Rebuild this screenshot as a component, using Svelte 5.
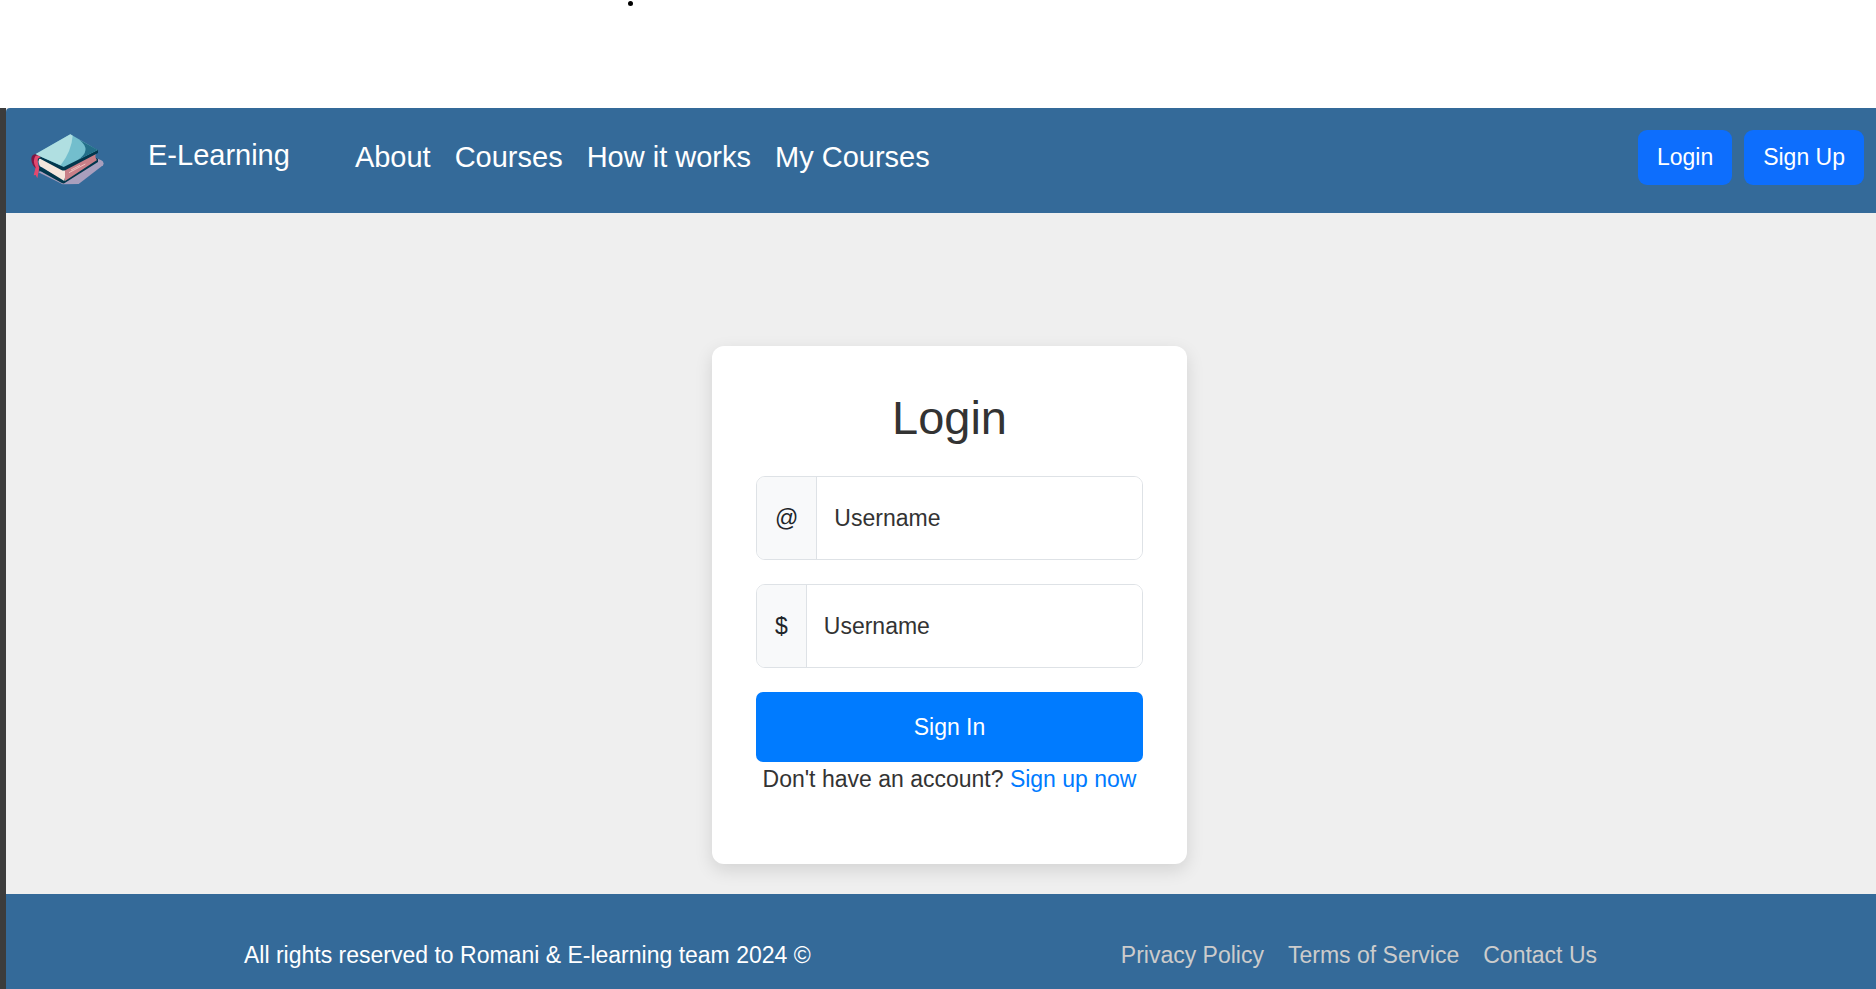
<script>
  const navLinks = ['About', 'Courses', 'How it works', 'My Courses'];
  const footerLinks = ['Privacy Policy', 'Terms of Service', 'Contact Us'];
  const fields = [
    { id: 'username', sign: '@', type: 'text' },
    { id: 'password', sign: '$', type: 'password' }
  ];
</script>

<div class="top"><span class="dot"></span></div>

<div class="page">
  <header>
    <a class="logo" href="#home" aria-label="Home">
      <svg viewBox="33 26 219 153" width="73" height="51" aria-hidden="true">
        <path fill="#a99fbd" d="M54 140 L128 177 L176 176 L249 120 Q254 110 244 105 L228 98 Z" />
        <path fill="#02374d" d="M50 118 L130 161 L230 98 L234 101 L234 110 L133 174 Q129 175 124 172 L50 131 Z" />
        <path fill="#f5e6dd" d="M56 94 Q54 114 61 123 L133 167 L138 134 L66 97 Z" />
        <path fill="#c87f88" d="M135 132 L228 84 Q223 97 231 104 L135 167 Z" />
        <path fill="none" stroke="#f0cfca" stroke-width="2.5" d="M147 142 L196 116 M153 134 L180 120" />
        <path fill="#02374d" d="M44 88 L151 30 L234 74 L234 83 L137 134 Q131 137 124 134 L62 101 Q56 99 56 106 L44 104 Z" />
        <path fill="#73becd" d="M46 87 L151 27 L233 74 L131 125 Z" />
        <path fill="#246f89" d="M178 43 L233 74 L172 105 Q218 74 178 43 Z" />
        <path fill="#b0dfe1" d="M46 87 L151 27 L158 31 Q155 76 122 120 Z" />
        <path fill="#7b1743" d="M48 87 Q34 87 34 101 Q35 121 50 131 L53 124 Q45 113 49 99 L58 97 Z" />
        <path fill="#e4486e" d="M47 91 Q58 88 62 96 Q52 97 53 109 Q54 120 58 127 L52 159 L47 149 L41 150 L47 126 Q36 105 47 91 Z" />
      </svg>
    </a>
    <a class="brand" href="#home">E-Learning</a>
    <nav>
      {#each navLinks as link}
        <a href="#{link}">{link}</a>
      {/each}
    </nav>
    <div class="actions">
      <button type="button">Login</button>
      <button type="button">Sign Up</button>
    </div>
  </header>

  <main>
    <form class="card">
      <h1>Login</h1>
      {#each fields as field}
        <div class="group">
          <label for={field.id}>{field.sign}</label>
          <input id={field.id} type={field.type} placeholder="Username" />
        </div>
      {/each}
      <button class="submit" type="button">Sign In</button>
      <p>Don't have an account? <a href="#signup">Sign up now</a></p>
    </form>
  </main>

  <footer>
    <span>All rights reserved to Romani &amp; E-learning team 2024 ©</span>
    <div class="legal">
      {#each footerLinks as link}
        <a href="#{link}">{link}</a>
      {/each}
    </div>
  </footer>
</div>

<style>
  :global(body) {
    margin: 0;
    background: #fff;
    color: #333;
    font-family: "Liberation Sans", Arial, sans-serif;
    font-size: 23px;
  }
  * {
    box-sizing: border-box;
  }
  a {
    text-decoration: none;
  }
  button {
    border: 0;
    color: #fff;
    font: inherit;
    cursor: pointer;
  }
  .top {
    display: flex;
    height: 108px;
    padding: 1px 0 0 628px;
  }
  .dot {
    width: 5px;
    height: 5px;
    border-radius: 50%;
    background: #000;
  }
  .page {
    border-left: 6px solid #3c3c3c;
    background: #efefef;
  }
  header {
    display: flex;
    align-items: center;
    padding: 22px 12px 28px 25px;
    border-top-left-radius: 4px;
    background: #346a99;
  }
  .logo {
    display: flex;
    padding-top: 4px;
  }
  .brand {
    margin-left: 44px;
    padding-bottom: 4px;
    color: #fff;
    font-size: 29px;
  }
  nav {
    display: flex;
    gap: 24px;
    margin-left: 65px;
    font-size: 29px;
  }
  nav a {
    color: #fff;
  }
  .actions {
    display: flex;
    gap: 12px;
    margin-left: auto;
  }
  .actions button {
    height: 55px;
    padding: 0 19px;
    border-radius: 9px;
    background: #0d6efd;
  }
  main {
    display: flex;
    justify-content: center;
    padding: 133px 0 30px 17px;
  }
  .card {
    display: flex;
    flex-direction: column;
    width: 475px;
    padding: 44px 44px 68px;
    border-radius: 12px;
    background: #fff;
    box-shadow: 0 6px 18px rgba(0, 0, 0, 0.12);
  }
  h1 {
    margin: 0 0 30px;
    font-size: 47px;
    font-weight: 400;
    line-height: 56px;
    text-align: center;
  }
  .group {
    display: flex;
    height: 84px;
    margin-bottom: 24px;
    border: 1px solid #dee2e6;
    border-radius: 9px;
    overflow: hidden;
  }
  label {
    display: flex;
    align-items: center;
    padding: 0 18px;
    border-right: 1px solid #dee2e6;
    background: #f8f9fa;
    color: #212529;
  }
  input {
    flex: 1;
    min-width: 0;
    padding: 0 17px;
    border: 0;
    outline: 0;
    background: #fff;
    color: #333;
    font: inherit;
  }
  input::placeholder {
    color: #333;
    opacity: 1;
  }
  .submit {
    height: 70px;
    border-radius: 7px;
    background: #007bff;
  }
  p {
    margin: 0;
    line-height: 34px;
    text-align: center;
    white-space: nowrap;
  }
  p a {
    color: #007bff;
  }
  footer {
    display: flex;
    justify-content: space-between;
    padding: 43px 279px 16px 238px;
    background: #346a99;
    color: #fff;
    line-height: 36px;
  }
  .legal {
    display: flex;
    gap: 24px;
  }
  .legal a {
    color: #ccc;
  }
</style>
